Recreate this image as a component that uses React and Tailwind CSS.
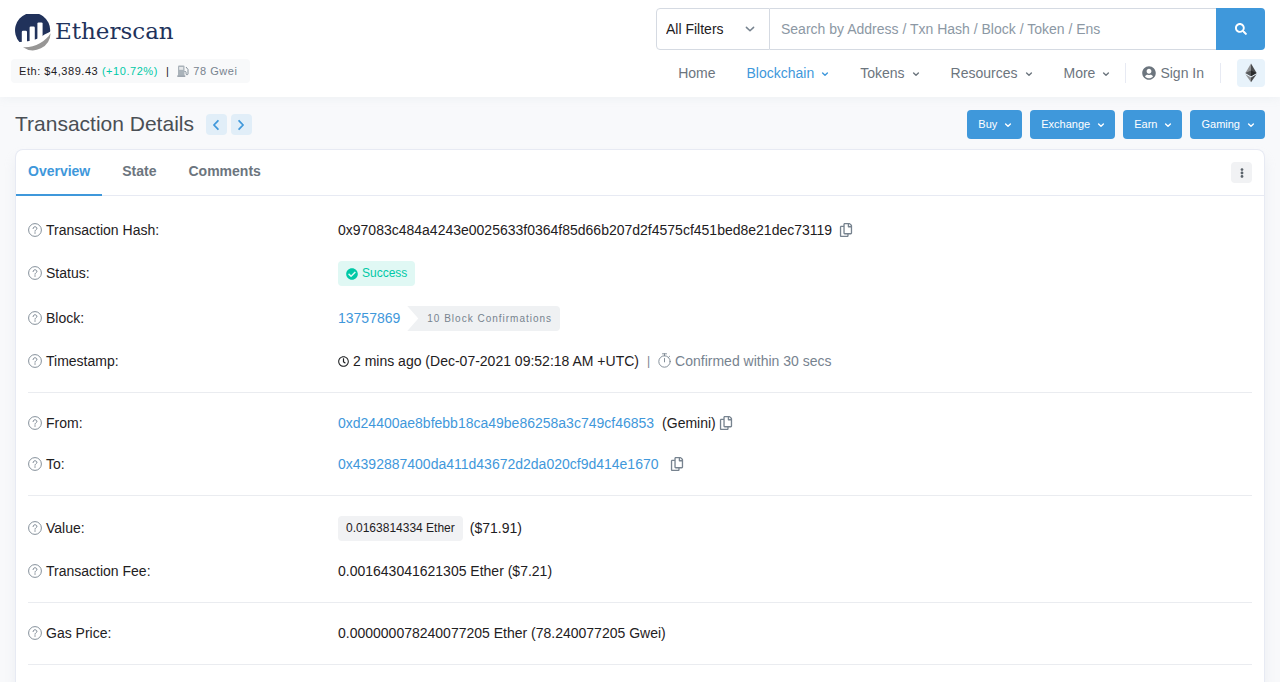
import React from "react";
import {
  FaCheckCircle,
  FaEllipsisV,
  FaRegClock,
  FaRegCopy,
  FaSearch,
  FaUserCircle,
} from "react-icons/fa";

const navItems = [
  { label: "Home" },
  { label: "Blockchain", menu: true, active: true },
  { label: "Tokens", menu: true },
  { label: "Resources", menu: true },
  { label: "More", menu: true },
];

const promoMenus = ["Buy", "Exchange", "Earn", "Gaming"];

const tabs = ["Overview", "State", "Comments"];

function Chevron({ className = "w-2 h-2", strokeWidth = 1.4 }) {
  return (
    <svg viewBox="0 0 8 8" className={className} fill="none" aria-hidden="true">
      <path
        d="M1.600 2.900 4 5.200l2.400-2.300"
        stroke="currentColor"
        strokeWidth={strokeWidth}
        strokeLinecap="round"
        strokeLinejoin="round"
      />
    </svg>
  );
}

function Logo() {
  return (
    <a href="#" className="flex items-start gap-1 text-[#21325b]">
      <svg viewBox="0 0 36 37" className="w-9 h-[37px]" aria-hidden="true">
        <path
          d="M4.600 28.200A17.600 17.600 0 1 1 35.200 17.200C32.600 21.800 24 27.800 13.500 28.600c-3 .2-6.200.2-8.900-.4Z"
          fill="#21325b"
        />
        <path
          d="M35.600 19.200A17.700 17.700 0 0 1 8 33.200C19 34 30.500 27.800 35.600 19.200Z"
          fill="#979695"
        />
        <g fill="#fff">
          <path d="M6.800 18q0-1.200 1.200-1.200h2.800q1.200 0 1.200 1.200V29h-5.200Z" />
          <path d="M14.600 13.800q0-1.200 1.200-1.200h2.800q1.200 0 1.200 1.200V27.500l-5.200 1.500Z" />
          <path d="M22.400 9.600q0-1.200 1.200-1.200h2.800q1.200 0 1.200 1.200V23.500l-5.200 3Z" />
          <path d="M3.400 27.900C15 28.200 24 25 29.500 20.500L35.700 17.500C30 26 18 31.300 5 29.800Z" />
        </g>
      </svg>
      <span className="pt-1 font-['DejaVu_Serif',serif] text-[23px] leading-[26px]">
        Etherscan
      </span>
    </a>
  );
}

function GasPump() {
  return (
    <svg viewBox="0 0 12 12" className="w-3 h-3" fill="none" aria-hidden="true">
      <path d="M1 1.500Q1 .5 2 .5h4.500q1 0 1 1V10.500H1Z" fill="#77838f" fillOpacity=".6" />
      <path d="M2.200 2h4v2.800h-4Z" fill="#fff" fillOpacity=".7" />
      <path d="M.3 10.500h8v1.200h-8Z" fill="#77838f" />
      <path
        d="M7.500 6.500h.6q1 0 1 1v1.400q0 .9.900.9t1-.9V4.500L9 2"
        stroke="#77838f"
        strokeWidth=".9"
      />
    </svg>
  );
}

function EtherIcon() {
  return (
    <svg viewBox="0 0 12 20" className="w-3 h-5" aria-hidden="true">
      <path d="M6 .5 11.600 10 6 13.300Z" fill="#4a4b4d" />
      <path d="M6 .5.4 10 6 13.300Z" fill="#929496" />
      <path d="M6 7.500 11.600 10 6 13.300Z" fill="#2a2b2c" />
      <path d="M6 7.500.4 10 6 13.300Z" fill="#55585a" />
      <path d="M6 14.500 11.600 11.200 6 19.300Z" fill="#4a4b4d" />
      <path d="M6 14.500.4 11.200 6 19.300Z" fill="#929496" />
    </svg>
  );
}

function HelpIcon() {
  return (
    <svg
      viewBox="0 0 14 14"
      className="w-[14px] h-[14px] mb-[2px] shrink-0"
      fill="none"
      aria-hidden="true"
    >
      <circle cx="7" cy="7" r="6.400" stroke="#77838f" strokeWidth=".9" />
      <path
        d="M5.100 5.500C5.200 4.400 6 3.800 7 3.800s1.900.6 1.900 1.600C8.900 6.700 7 6.700 7 8.200"
        stroke="#77838f"
        strokeWidth="1"
        strokeLinecap="round"
      />
      <circle cx="7" cy="10" r=".7" fill="#77838f" />
    </svg>
  );
}

function Stopwatch() {
  return (
    <svg
      viewBox="0 0 13 15"
      className="w-[13px] h-[15px] mb-[2px]"
      fill="none"
      stroke="#77838f"
      strokeWidth=".9"
      strokeLinecap="round"
      aria-hidden="true"
    >
      <circle cx="6.500" cy="8.500" r="5.700" />
      <path d="M4.500.8h4M6.500.8v2M6.500 5.500v3.400M10.600 4.300l1-1" />
    </svg>
  );
}

function CopyButton() {
  return (
    <button type="button" aria-label="Copy" className="mb-[2px] text-[#77838f]">
      <FaRegCopy className="w-[14px] h-[14px]" />
    </button>
  );
}

function Row({ label, children, tall }) {
  return (
    <div
      className={`grid grid-cols-4 gap-4 items-center ${tall ? "h-[25px]" : "h-[21px]"}`}
    >
      <dt className="flex items-center gap-1">
        <HelpIcon />
        {label}:
      </dt>
      <dd className="col-span-3 flex items-center">{children}</dd>
    </div>
  );
}

function Divider() {
  return <hr className="border-0 h-px bg-[#eaecf0]" />;
}

function Header() {
  return (
    <header className="bg-white h-[97px] px-[15px] pt-2 flex justify-between shadow-[0_1px_10px_rgba(151,164,175,0.1)]">
      <div className="flex flex-col items-start gap-2 pt-[6px]">
        <Logo />
        <div className="-ml-1 h-6 px-2 pr-3 flex items-center gap-2 rounded bg-[#f8f9fa] text-[11px] tracking-wider">
          <span>
            Eth: $4,389.43 <span className="text-[#00c9a7]">(+10.72%)</span>
          </span>
          <span>|</span>
          <span className="flex items-center gap-1 text-[#77838f]">
            <GasPump />
            78 Gwei
          </span>
        </div>
      </div>

      <div className="w-[609px]">
        <form className="flex h-[42px]" onSubmit={(e) => e.preventDefault()}>
          <div className="relative w-[114px]">
            <select
              aria-label="Filter"
              className="appearance-none w-full h-full pl-[9px] rounded-l border border-[#d5dae2] bg-white"
            >
              <option>All Filters</option>
            </select>
            <Chevron
              className="absolute right-[14px] top-[15px] w-3 h-3 text-[#77838f] pointer-events-none"
              strokeWidth={1}
            />
          </div>
          <input
            type="text"
            aria-label="Search"
            placeholder="Search by Address / Txn Hash / Block / Token / Ens"
            className="flex-1 min-w-0 px-[11px] border-y border-[#d5dae2] placeholder:text-[#8c98a4] outline-none"
          />
          <button
            type="submit"
            aria-label="Search"
            className="w-[49px] flex items-center justify-center rounded-r bg-[#3f98db] text-white"
          >
            <FaSearch className="w-3 h-3" />
          </button>
        </form>

        <nav className="flex items-center justify-end h-7 mt-[9px] text-[#6c757e]">
          <ul className="flex gap-[31px] mr-[15px]">
            {navItems.map((item) => (
              <li key={item.label}>
                <a
                  href="#"
                  className={`flex items-center gap-[7px] ${item.active ? "text-[#3f98db]" : ""}`}
                >
                  {item.label}
                  {item.menu && <Chevron className="w-2 h-2 mt-[2px]" />}
                </a>
              </li>
            ))}
          </ul>
          <a
            href="#"
            className="flex items-center gap-1 px-4 h-5 border-x border-[#e7eaf3]"
          >
            <FaUserCircle className="w-[14px] h-[14px]" />
            Sign In
          </a>
          <button
            type="button"
            aria-label="Explorers"
            className="ml-4 w-7 h-7 flex items-center justify-center rounded bg-[#e8f3fb]"
          >
            <EtherIcon />
          </button>
        </nav>
      </div>
    </header>
  );
}

export default function App() {
  return (
    <div className="min-h-screen flex flex-col bg-[#f8f9fb] font-['Liberation_Sans',Arial,sans-serif] text-[14px] leading-[21px] text-[#1e2022]">
      <Header />

      <main className="flex-1 flex flex-col px-[15px]">
        <div className="flex items-center justify-between pt-[13px] pb-[10px]">
          <div className="flex items-center gap-3">
            <h1 className="text-[21px] leading-[21px] pb-[2px] text-[#4a4f55]">
              Transaction Details
            </h1>
            <div className="flex gap-1 text-[#3f98db]">
              <button
                type="button"
                aria-label="Previous"
                className="w-[21px] h-[21px] flex items-center justify-center rounded bg-[#e1eef8]"
              >
                <Chevron className="w-[14px] h-[14px] rotate-90" strokeWidth={1} />
              </button>
              <button
                type="button"
                aria-label="Next"
                className="w-[21px] h-[21px] flex items-center justify-center rounded bg-[#e1eef8]"
              >
                <Chevron className="w-[14px] h-[14px] -rotate-90" strokeWidth={1} />
              </button>
            </div>
          </div>
          <div className="flex gap-2">
            {promoMenus.map((name) => (
              <button
                key={name}
                type="button"
                className="h-[29px] pl-[11px] pr-[10px] flex items-center gap-[7px] rounded bg-[#3f98db] text-white text-[11px]"
              >
                {name}
                <Chevron className="w-2 h-2" />
              </button>
            ))}
          </div>
        </div>

        <section className="flex-1 bg-white rounded-t-lg border border-b-0 border-[#e7eaf3] shadow-[0_8px_12px_rgba(189,197,209,0.2)]">
          <div className="h-[46px] pr-3 flex items-center justify-between border-b border-[#e7eaf3]">
            <div className="flex gap-2 h-[46px]">
              {tabs.map((tab) => (
                <button
                  key={tab}
                  type="button"
                  className={`px-3 font-bold border-b-2 ${
                    tab === "Overview"
                      ? "text-[#3f98db] border-[#3f98db]"
                      : "text-[#6c757e] border-transparent"
                  }`}
                >
                  {tab}
                </button>
              ))}
            </div>
            <button
              type="button"
              aria-label="More options"
              className="w-[21px] h-[21px] flex items-center justify-center rounded bg-[#f1f2f4] text-[#5b636b]"
            >
              <FaEllipsisV className="w-[10px] h-[10px]" />
            </button>
          </div>

          <dl className="px-3 pt-6 flex flex-col gap-5">
            <Row label="Transaction Hash">
              <span className="mr-[7px]">
                0x97083c484a4243e0025633f0364f85d66b207d2f4575cf451bed8e21dec73119
              </span>
              <CopyButton />
            </Row>
            <Row label="Status" tall>
              <span className="h-[25px] px-2 flex items-center gap-1 rounded bg-[#e0f8f4] text-[#00c9a7] text-[12px]">
                <FaCheckCircle className="w-3 h-3" />
                Success
              </span>
            </Row>
            <Row label="Block" tall>
              <a href="#" className="mr-[7px] text-[#3f98db]">
                13757869
              </a>
              <span className="h-[25px] pl-5 pr-2 flex items-center rounded-r bg-[#eff1f3] text-[#77838f] text-[10px] tracking-widest [clip-path:polygon(0_0,100%_0,100%_100%,0_100%,11px_50%)]">
                10 Block Confirmations
              </span>
            </Row>
            <Row label="Timestamp">
              <FaRegClock className="w-[11px] h-[11px] mr-1" />
              2 mins ago (Dec-07-2021 09:52:18 AM +UTC)
              <span className="mx-2 text-[#77838f] text-[12px]">|</span>
              <span className="flex items-center gap-1 text-[#77838f]">
                <Stopwatch />
                Confirmed within 30 secs
              </span>
            </Row>

            <Divider />

            <Row label="From">
              <a href="#" className="mr-2 text-[#3f98db]">
                0xd24400ae8bfebb18ca49be86258a3c749cf46853
              </a>
              <span className="mr-[3px]">(Gemini)</span>
              <CopyButton />
            </Row>
            <Row label="To">
              <a href="#" className="mr-[11px] text-[#3f98db]">
                0x4392887400da411d43672d2da020cf9d414e1670
              </a>
              <CopyButton />
            </Row>

            <Divider />

            <Row label="Value" tall>
              <span className="h-[25px] px-2 mr-[7px] flex items-center rounded bg-[#f1f2f4] text-[12px]">
                0.0163814334 Ether
              </span>
              ($71.91)
            </Row>
            <Row label="Transaction Fee">0.001643041621305 Ether ($7.21)</Row>

            <Divider />

            <Row label="Gas Price">
              0.000000078240077205 Ether (78.240077205 Gwei)
            </Row>

            <Divider />
          </dl>
        </section>
      </main>
    </div>
  );
}
